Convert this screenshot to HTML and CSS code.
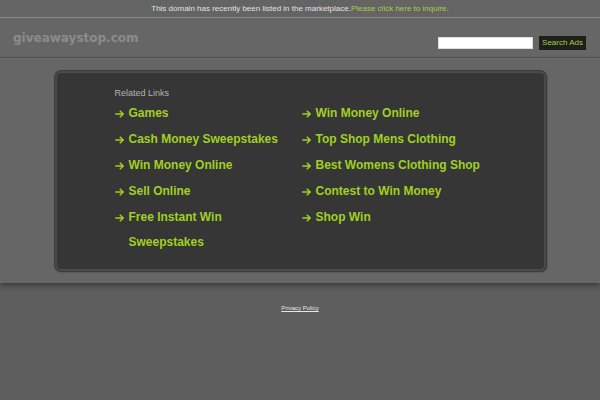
FILE: index.html
```html
<!DOCTYPE html>
<html>
<head>
<meta charset="utf-8">
<link rel="stylesheet" href="styles.css">
</head>
<body>
<div class="topbar">This domain has recently been listed in the marketplace.<a href="#" class="inquire">Please click here to inquire.</a></div>
<div class="header">
  <div class="logo">giveawaystop.com</div>
  <form class="search">
    <input type="text" class="search-input">
    <button type="button" class="search-btn">Search Ads</button>
  </form>
</div>
<div class="main">
  <div class="panel">
    <div class="related">Related Links</div>
    <div class="cols">
      <ul class="col">
        <li><svg class="arrow" viewBox="0 0 9 8"><path d="M0.3 4H8M4.8 0.8L8.1 4L4.8 7.2"/></svg><a href="#">Games</a></li>
        <li><svg class="arrow" viewBox="0 0 9 8"><path d="M0.3 4H8M4.8 0.8L8.1 4L4.8 7.2"/></svg><a href="#">Cash Money Sweepstakes</a></li>
        <li><svg class="arrow" viewBox="0 0 9 8"><path d="M0.3 4H8M4.8 0.8L8.1 4L4.8 7.2"/></svg><a href="#">Win Money Online</a></li>
        <li><svg class="arrow" viewBox="0 0 9 8"><path d="M0.3 4H8M4.8 0.8L8.1 4L4.8 7.2"/></svg><a href="#">Sell Online</a></li>
        <li><svg class="arrow" viewBox="0 0 9 8"><path d="M0.3 4H8M4.8 0.8L8.1 4L4.8 7.2"/></svg><a href="#">Free Instant Win Sweepstakes</a></li>
      </ul>
      <ul class="col">
        <li><svg class="arrow" viewBox="0 0 9 8"><path d="M0.3 4H8M4.8 0.8L8.1 4L4.8 7.2"/></svg><a href="#">Win Money Online</a></li>
        <li><svg class="arrow" viewBox="0 0 9 8"><path d="M0.3 4H8M4.8 0.8L8.1 4L4.8 7.2"/></svg><a href="#">Top Shop Mens Clothing</a></li>
        <li><svg class="arrow" viewBox="0 0 9 8"><path d="M0.3 4H8M4.8 0.8L8.1 4L4.8 7.2"/></svg><a href="#">Best Womens Clothing Shop</a></li>
        <li><svg class="arrow" viewBox="0 0 9 8"><path d="M0.3 4H8M4.8 0.8L8.1 4L4.8 7.2"/></svg><a href="#">Contest to Win Money</a></li>
        <li><svg class="arrow" viewBox="0 0 9 8"><path d="M0.3 4H8M4.8 0.8L8.1 4L4.8 7.2"/></svg><a href="#">Shop Win</a></li>
      </ul>
    </div>
  </div>
</div>
<div class="footer"><a href="#">Privacy Policy</a></div>
</body>
</html>
```
FILE: styles.css
```css
html, body {
  margin: 0;
  padding: 0;
}
body {
  background: #5e5e5e;
  font-family: "Liberation Sans", Arial, sans-serif;
  width: 600px;
  height: 400px;
  overflow: hidden;
}
.topbar {
  height: 18px;
  line-height: 18px;
  background: #646464;
  border-bottom: 1px solid #8a8a8a;
  text-align: center;
  font-size: 8px;
  color: #e2e2e2;
  box-sizing: border-box;
}
.inquire {
  color: #a8cc44;
  text-decoration: none;
}
.header {
  height: 40px;
  background: #666666;
  border-bottom: 1px solid #545454;
  display: flex;
  align-items: center;
  justify-content: space-between;
  padding: 0 14px 0 13px;
  box-sizing: border-box;
}
.logo {
  font-family: "DejaVu Sans", Verdana, sans-serif;
  font-weight: bold;
  font-size: 12px;
  color: #8c8c8c;
  margin-top: 0;
}
.search {
  display: flex;
  align-items: center;
  gap: 6px;
  margin: 10px 0 0 0;
}
.search-input {
  width: 95px;
  height: 12px;
  box-sizing: border-box;
  border: 1px solid #dddddd;
  background: #ffffff;
  padding: 0;
  margin: 0;
}
.search-btn {
  height: 14px;
  padding: 0 3px;
  margin: 0;
  border: none;
  background: #1c1f1a;
  color: #a8cc44;
  font-family: "Liberation Sans", Arial, sans-serif;
  font-size: 8px;
  line-height: 14px;
}
.main {
  background: #666666;
  padding: 12px 0 12px 0;
  box-shadow: 0 3px 5px rgba(0, 0, 0, 0.35);
  border-top: 1px solid #6c6c6c;
}
.panel {
  width: 491px;
  height: 200px;
  margin: 0 auto;
  background: #363636;
  border: 2px solid #4a4a4a;
  border-radius: 6px;
  box-shadow: 0 0 0 1px #3c3c3c, 1px 1px 2px rgba(0, 0, 0, 0.4);
  padding: 0 0 0 58px;
  box-sizing: border-box;
}
.related {
  font-size: 9px;
  color: #b4b4b4;
  margin-top: 14px;
  line-height: 12px;
}
.cols {
  display: flex;
  margin-top: 2px;
}
.col {
  list-style: none;
  margin: 0;
  padding: 0;
  width: 187px;
}
.col li {
  display: flex;
  align-items: flex-start;
  font-size: 12px;
  font-weight: bold;
  line-height: 25px;
  margin-bottom: 1px;
  color: #a0d020;
}
.arrow {
  width: 9px;
  height: 8px;
  flex: none;
  margin: 9px 5px 0 0;
  fill: none;
  stroke: #a0d020;
  stroke-width: 1.5;
}
.col a {
  color: #a0d020;
  text-decoration: none;
  max-width: 165px;
}
.footer {
  text-align: center;
  padding-top: 21px;
  font-size: 6px;
  line-height: 8px;
}
.footer a {
  color: #e6e6e6;
}
```
